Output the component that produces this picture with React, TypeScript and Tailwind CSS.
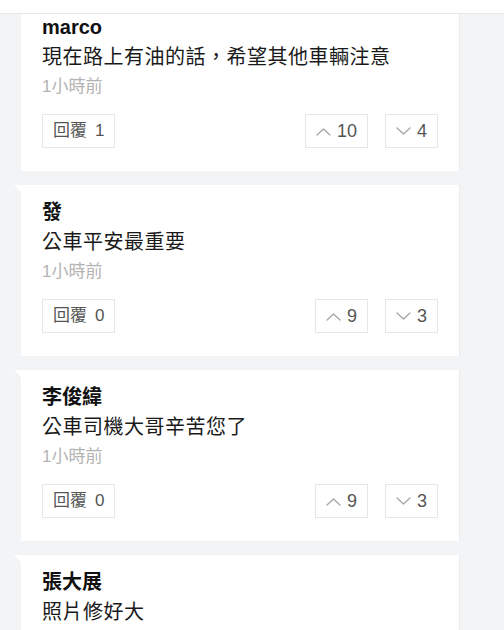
import * as React from "react"

interface Comment {
  name: string
  text: string
  time: string
  replies: number
  up: number
  down: number
}

const comments: Comment[] = [
  { name: "marco", text: "現在路上有油的話，希望其他車輛注意", time: "1小時前", replies: 1, up: 10, down: 4 },
  { name: "發", text: "公車平安最重要", time: "1小時前", replies: 0, up: 9, down: 3 },
  { name: "李俊緯", text: "公車司機大哥辛苦您了", time: "1小時前", replies: 0, up: 9, down: 3 },
  { name: "張大展", text: "照片修好大", time: "1小時前", replies: 0, up: 2, down: 1 },
]

const Chevron = ({ up }: { up: boolean }) => (
  <svg width="15" height="9" viewBox="0 0 15 9" fill="none" className="shrink-0">
    <polyline
      points={up ? "1,8 7.5,2 14,8" : "1,1 7.5,7 14,1"}
      stroke="#a8a8a8"
      strokeWidth="1.4"
      strokeLinecap="round"
      strokeLinejoin="round"
    />
  </svg>
)

function CommentCard({ c }: { c: Comment }) {
  return (
    <div className="relative w-[439px] h-[171px] shrink-0 bg-white border-r border-[#e9eaec] px-[21px] pt-[12px]">
      <div className="absolute -left-[7px] top-0 w-0 h-0 border-t-[7px] border-t-white border-l-[7px] border-l-transparent" />
      <div className="text-[20px] leading-[30px] font-bold text-[#111]">{c.name}</div>
      <div className="text-[20px] leading-[30px] text-[#1a1a1a] tracking-[0.5px]">{c.text}</div>
      <div className="text-[17px] leading-[29px] text-[#b3b3b3]">{c.time}</div>
      <div className="mt-[13px] flex items-center">
        <div className="h-[34px] px-[10px] flex items-center gap-[8px] border border-[#e6e6e6] text-[17px] text-[#555]">
          <span>回覆</span>
          <span>{c.replies}</span>
        </div>
        <div className="ml-auto flex gap-[17px]">
          <div className="h-[34px] px-[10px] flex items-center gap-[6px] border border-[#e6e6e6] text-[18px] text-[#555]">
            <Chevron up />
            <span>{c.up}</span>
          </div>
          <div className="h-[34px] px-[10px] flex items-center gap-[6px] border border-[#e6e6e6] text-[18px] text-[#555]">
            <Chevron up={false} />
            <span>{c.down}</span>
          </div>
        </div>
      </div>
    </div>
  )
}

export default function App() {
  return (
    <div
      className="relative w-[504px] h-[630px] overflow-hidden bg-[#f3f4f6]"
      style={{ fontFamily: '"Liberation Sans", "Noto Sans CJK TC", sans-serif' }}
    >
      <div className="absolute top-0 left-0 right-0 h-[14px] bg-white border-b border-[#e6e7e9] z-10" />
      <div className="flex flex-col gap-[14px] pl-[21px]">
        {comments.map((c) => (
          <CommentCard key={c.name} c={c} />
        ))}
      </div>
    </div>
  )
}
